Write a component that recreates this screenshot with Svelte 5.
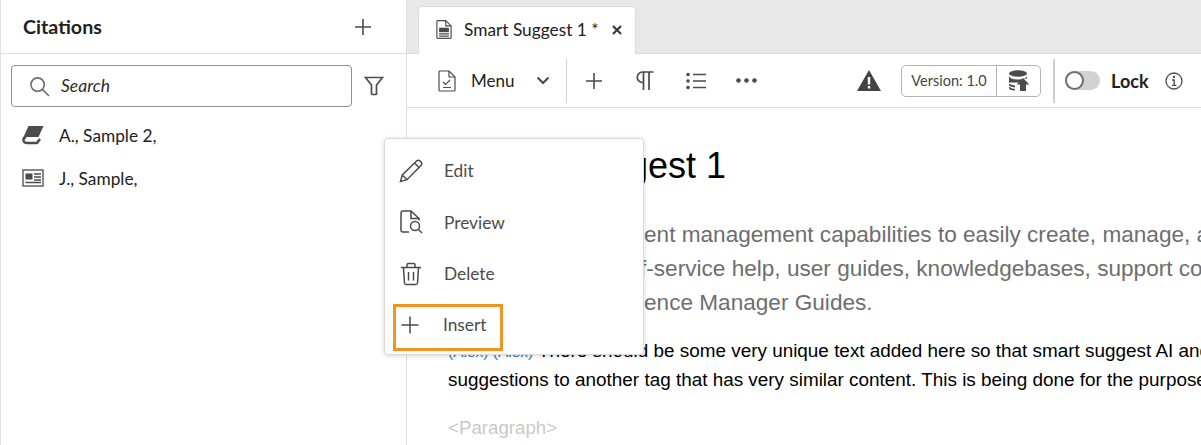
<script>
  const citations = [
    { label: 'A., Sample 2,', kind: 'book' },
    { label: 'J., Sample,', kind: 'news' }
  ];
  const items = ['Edit', 'Preview', 'Delete', 'Insert'];
</script>

<div class="app">
  <aside class="side">
    <header class="side-head">
      <h2>Citations</h2>
      <svg class="ic18" viewBox="0 0 18 18"><path d="M9 1v16M1 9h16" /></svg>
    </header>
    <div class="search-row">
      <div class="search">
        <svg class="ic22" viewBox="0 0 22 22"><circle cx="9" cy="9" r="7" /><path d="M14 14l7 7" /></svg>
        <span>Search</span>
      </div>
      <svg class="ic-filter" viewBox="0 0 20 20"><path d="M1.500 1.500h17l-6 7.500v8.500q0 1-1 1h-3q-1 0-1-1V9z" /></svg>
    </div>
    <ul class="list">
      {#each citations as c}
        <li>
          {#if c.kind === 'book'}
            <svg class="ic-cit" viewBox="0 0 22 20">
              <path class="fill" d="M6.500 1h15l-5 11H1.500z" />
              <path class="thick" d="M4 12q-3 1-2.500 3.500T5 18h10l3-4" />
            </svg>
          {:else}
            <svg class="ic-cit" viewBox="0 0 22 20">
              <rect x="1" y="2" width="20" height="16" class="thin" />
              <rect x="3.500" y="5.500" width="7" height="6" class="fill" />
              <path class="thin" d="M12 6h7M12 9h7M12 12h7M3.500 14.500h15.500" />
            </svg>
          {/if}
          <span>{c.label}</span>
        </li>
      {/each}
    </ul>
  </aside>

  <main class="main">
    <div class="tabs">
      <div class="tab">
        <svg class="ic-doc" viewBox="0 0 18 22">
          <path class="thin2" d="M2 1h9l6 6v13a1 1 0 0 1-1 1H2a1 1 0 0 1-1-1V2a1 1 0 0 1 1-1z" />
          <rect x="3.500" y="9" width="11" height="5" class="fill" />
          <path class="thin2" d="M3.500 16h11M3.500 18.500h11M11 1v6h6" />
        </svg>
        <span class="tab-title">Smart Suggest 1 *</span>
        <svg class="ic-x" viewBox="0 0 10 10"><path d="M1 1l8 8M9 1l-8 8" /></svg>
      </div>
    </div>

    <div class="toolbar">
      <svg class="ic-menu" viewBox="0 0 18 22">
        <path d="M2 1h9l6 6v13a1 1 0 0 1-1 1H2a1 1 0 0 1-1-1V2a1 1 0 0 1 1-1z" />
        <path d="M11 1v6h6M5 12l2.500 2.500L12 10M5 17.500h8" />
      </svg>
      <span class="menu-label">Menu</span>
      <svg class="ic-chev" viewBox="0 0 14 9"><path d="M1.500 1.500L7 7l5.500-5.500" /></svg>
      <div class="vr first"></div>
      <svg class="ic18 t-plus" viewBox="0 0 18 18"><path d="M9 1v16M1 9h16" /></svg>
      <svg class="ic-pil" viewBox="0 0 18 20"><path d="M7.500 19V1M13 19V1M17.500 1H6.500a5 5 0 0 0 0 10.500h1" /></svg>
      <svg class="ic-list" viewBox="0 0 20 18">
        <circle cx="2" cy="2.500" r="1.800" class="dot" /><circle cx="2" cy="9" r="1.800" class="dot" /><circle cx="2" cy="15.500" r="1.800" class="dot" />
        <path d="M7 2.500h13M7 9h13M7 15.500h13" />
      </svg>
      <svg class="ic-dots" viewBox="0 0 21 5"><circle cx="2.500" cy="2.500" r="2.300" /><circle cx="10.500" cy="2.500" r="2.300" /><circle cx="18.500" cy="2.500" r="2.300" /></svg>

      <div class="right">
        <svg class="ic-warn" viewBox="0 0 24 21">
          <path fill-rule="evenodd" d="M12 0L24 21H0zM10.800 7h2.400v7.500h-2.400zM10.800 16h2.400v2.500h-2.400z" />
        </svg>
        <div class="version">
          <span class="v-label">Version: 1.0</span>
          <span class="v-icon">
            <svg viewBox="0 0 22 22">
              <ellipse cx="10" cy="3.500" rx="9" ry="3.200" class="solid" />
              <path class="solid" d="M1 6q1 3.500 9 3.500T19 6v2.500q-2 .5-4 .8L12 12.500H1zM1 13.500q2 1.500 6 2v2q-4-.5-6-2zM1 16.500q2 2 6 2.500v1.500q-6-.5-6-2.500z" />
              <path class="solid" d="M15 8l6.500 6.500H18V21h-6v-6.500H8.500z" stroke="#fff" stroke-width="1" />
            </svg>
          </span>
        </div>
        <div class="vr second"></div>
        <div class="switch"><span class="knob"></span></div>
        <span class="lock">Lock</span>
        <svg class="ic-info" viewBox="0 0 18 18">
          <circle cx="9" cy="9" r="8" />
          <circle cx="9" cy="5" r="1.200" class="dot" />
          <path d="M7 8h2.200v5M7 13.300h4.500" />
        </svg>
      </div>
    </div>

    <article class="doc">
      <h1>Smart Suggest 1</h1>
      <p class="lead"><span class="pre a">It has rich cont</span>ent management capabilities to easily create, manage, and publish<br />
        <span class="pre b">Create your sel</span>f-service help, user guides, knowledgebases, support content<br />
        <span class="pre a">with Adobe Experi</span>ence Manager Guides.</p>
      <p class="body"><span class="cite">(Alex) (Alex)</span>There should be some very unique text added here so that smart suggest AI and<br />
        suggestions to another tag that has very similar content. This is being done for the purpose of testing</p>
      <p class="ph">&lt;Paragraph&gt;</p>
    </article>
  </main>

  <div class="popup">
    {#each items as it}
      <div class="item" class:focus={it === 'Insert'}>
        {#if it === 'Edit'}
          <svg viewBox="0 0 24 24"><path d="M1.500 22.500l1.800-6.500L17.800 1.800q1.500-1.200 3 0l1.400 1.400q1.200 1.500 0 3L8 20.700zM3.300 16l4.700 4.700M15.500 4l4.500 4.500" /></svg>
        {:else if it === 'Preview'}
          <svg viewBox="0 0 24 24"><path d="M10 22H4q-2 0-2-2V3q0-2 2-2h8l8 7.500v2M12 1.500v7h8" /><circle cx="16" cy="16" r="4.500" /><path d="M19.500 19.500l3.500 3.500" /></svg>
        {:else if it === 'Delete'}
          <svg viewBox="0 0 24 24"><path d="M2 5.500h20M8 5V3q0-1.500 1.500-1.500h5Q16 1.500 16 3v2M4.500 6l1 15q.2 1.500 1.500 1.500h10q1.300 0 1.500-1.500l1-15M9.500 10v8.500M14.500 10v8.500" /></svg>
        {:else}
          <svg viewBox="0 0 24 24"><path d="M12 3.500v17M3.500 12h17" /></svg>
        {/if}
        <span>{it}</span>
      </div>
    {/each}
  </div>
</div>

<style>
  :global(body) { margin: 0; background: #fff; }
  .app {
    position: relative; display: flex; width: 1201px; height: 445px; overflow: hidden;
    font-family: Lato, "Noto Sans", sans-serif; color: #222; background: #fff;
  }
  svg { display: block; flex: none; fill: none; stroke: #4b4b4b; stroke-width: 1.6; }
  svg .fill, svg .dot, .solid { fill: #4b4b4b; stroke: none; }
  svg .thin, svg .thin2 { stroke-width: 1.3; }
  svg .thick { stroke-width: 2.400; }

  .side { width: 405px; flex: none; border-left: 1px solid #e1e1e1; border-right: 1px solid #dcdcdc; }
  .side-head { height: 53px; display: flex; align-items: center; justify-content: space-between; padding: 0 34px 0 22px; border-bottom: 1px solid #dcdcdc; }
  h2 { margin: 0; font-size: 19.700px; font-weight: 700; color: #222; }
  .ic18 { width: 18px; height: 18px; }
  .search-row { display: flex; align-items: center; padding: 11px 0 0 10px; }
  .search { width: 341px; height: 42px; box-sizing: border-box; border: 1px solid #8e8e8e; border-radius: 4px; display: flex; align-items: center; padding-left: 17px; gap: 11px; }
  .search span { font-style: italic; font-size: 17.500px; color: #2c2c2c; margin-top: -2px; }
  .ic22 { width: 21px; height: 21px; stroke: #6e6e6e; stroke-width: 1.700; }
  .ic-filter { width: 20px; height: 20px; margin-left: 12px; stroke-width: 1.700; }
  .list { list-style: none; margin: 7px 0 0; padding: 0 0 0 21px; }
  .list li { height: 42.800px; display: flex; align-items: center; gap: 15px; font-size: 17.300px; color: #222; }
  .ic-cit { width: 22px; height: 20px; }

  .main { flex: 1; min-width: 0; display: flex; flex-direction: column; }
  .tabs { height: 53px; background: #e8e8e8; border-bottom: 1px solid #dcdcdc; display: flex; align-items: flex-end; padding-left: 11px; }
  .tab { width: 218px; height: 48px; margin-bottom: -1px; box-sizing: border-box; background: #fff; border: 1px solid #dcdcdc; border-bottom: 0; border-radius: 5px 5px 0 0; display: flex; align-items: center; padding: 0 0 2px 17px; }
  .ic-doc { width: 16px; height: 21px; }
  .tab-title { width: 135px; flex: none; margin-left: 12px; font-size: 17.300px; color: #222; white-space: nowrap; }
  .ic-x { width: 10px; height: 10px; margin-left: 13px; stroke: #333; stroke-width: 2; }

  .toolbar { height: 53px; border-bottom: 1px solid #dcdcdc; display: flex; align-items: center; padding: 0 18px 0 31px; }
  .ic-menu { width: 18px; height: 22px; stroke-width: 1.200; }
  .menu-label { width: 45px; flex: none; margin-left: 15px; font-size: 17px; color: #222; }
  .ic-chev { width: 14px; height: 9px; margin-left: 20px; stroke-width: 2.200; }
  .vr { width: 1px; height: 44px; background: #d4d4d4; flex: none; }
  .vr.first { margin-left: 16px; }
  .t-plus { margin-left: 18px; }
  .ic-pil { width: 18px; height: 20px; margin-left: 33px; stroke-width: 1.700; }
  .ic-list { width: 20px; height: 18px; margin-left: 32px; stroke-width: 1.700; }
  .ic-dots { width: 21px; height: 5px; margin-left: 30px; fill: #4b4b4b; stroke: none; }
  .right { margin-left: auto; display: flex; align-items: center; }
  .ic-warn { width: 24px; height: 21px; fill: #444; stroke: none; }
  .version { margin-left: 20px; width: 140px; height: 32px; box-sizing: border-box; border: 1px solid #b4b4b4; border-radius: 5px; display: flex; align-items: center; }
  .v-label { width: 95px; text-align: center; font-size: 14.500px; color: #444; border-right: 1px solid #b4b4b4; line-height: 30px; flex: none; box-sizing: border-box; }
  .v-icon { flex: 1; display: flex; justify-content: center; }
  .v-icon svg { width: 22px; height: 22px; stroke: none; }
  .vr.second { margin-left: 12px; width: 2px; height: 44px; background: #cfcfcf; }
  .switch { margin-left: 10px; width: 35px; height: 19px; border-radius: 10px; background: #d2d2d2; position: relative; }
  .knob { position: absolute; left: 0; top: 0; width: 19px; height: 19px; box-sizing: border-box; border-radius: 50%; background: #fff; border: 2px solid #6e6e6e; }
  .lock { width: 37px; flex: none; margin-left: 11px; font-size: 18px; font-weight: 700; color: #222; }
  .ic-info { width: 18px; height: 18px; margin-left: 17px; stroke-width: 1.300; }

  .doc { padding-left: 41px; font-family: "Liberation Sans", Arial, sans-serif; white-space: nowrap; }
  h1 { margin: 35px 0 0; padding-left: 10px; font-size: 36px; line-height: 46px; font-weight: 400; color: #000; }
  .lead { margin: 29px 0 0; font-size: 22.600px; line-height: 34px; color: #6e6e6e; }
  .pre { display: inline-block; }
  .pre.a { width: 196px; }
  .pre.b { width: 192px; }
  .body { margin: 17px 0 0; font-size: 18.900px; line-height: 28px; color: #000; }
  .cite { display: inline-block; width: 90px; font-size: 15.500px; color: #2680c2; }
  .ph { margin: 20px 0 0; font-size: 18.700px; line-height: 28px; color: #c9c9c9; }

  .popup { position: absolute; left: 384px; top: 138px; width: 260px; height: 217px; box-sizing: border-box; padding-top: 6px; background: #fff; border: 1px solid #dadada; border-radius: 4px; box-shadow: 0 1px 5px rgba(0,0,0,.16); }
  .item { height: 51.500px; display: flex; align-items: center; padding-left: 14px; gap: 21px; font-size: 17.300px; color: #4b4b4b; box-sizing: border-box; }
  .item svg { width: 24px; height: 24px; stroke-width: 1.500; }
  .item.focus { position: absolute; left: 8px; top: 165px; width: 110px; height: 47px; padding: 0 0 6px 2px; border: 3px solid #f29423; gap: 21px; }
</style>
